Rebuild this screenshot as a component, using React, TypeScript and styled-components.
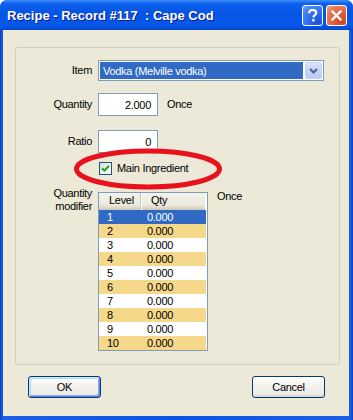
import React from 'react';
import styled, { createGlobalStyle } from 'styled-components';

const GlobalStyle = createGlobalStyle`
  html, body {
    margin: 0;
    padding: 0;
    background: #ffffff;
  }
  body {
    font-family: 'Liberation Sans', Arial, sans-serif;
    font-size: 11px;
    letter-spacing: -0.3px;
    color: #000;
  }
`;

const rows = [
  { level: 1, qty: '0.000' },
  { level: 2, qty: '0.000' },
  { level: 3, qty: '0.000' },
  { level: 4, qty: '0.000' },
  { level: 5, qty: '0.000' },
  { level: 6, qty: '0.000' },
  { level: 7, qty: '0.000' },
  { level: 8, qty: '0.000' },
  { level: 9, qty: '0.000' },
  { level: 10, qty: '0.000' },
];

const HelpIcon = () => (
  <svg width="11" height="13" viewBox="0 0 11 13">
    <path d="M2 4.2 C2 1.6 4 1 5.6 1 C7.6 1 9.2 2.2 9.2 3.9 C9.2 6 6.4 6.2 6.4 8.4" fill="none" stroke="#fff" strokeWidth="2.2" />
    <rect x="5.2" y="10" width="2.4" height="2.4" fill="#fff" />
  </svg>
);

const CloseIcon = () => (
  <svg width="11" height="11" viewBox="0 0 11 11">
    <path d="M1.5 1.5 L9.5 9.5 M9.5 1.5 L1.5 9.5" stroke="#fff" strokeWidth="2.3" strokeLinecap="square" />
  </svg>
);

const Chevron = () => (
  <svg width="9" height="6" viewBox="0 0 9 6">
    <path d="M1 1 L4.5 4.5 L8 1" fill="none" stroke="#4d6185" strokeWidth="2" />
  </svg>
);

const Check = () => (
  <svg width="9" height="9" viewBox="0 0 9 9">
    <path d="M1 4.2 L3.4 6.6 L8 1.8" fill="none" stroke="#21a121" strokeWidth="2" />
  </svg>
);

const App: React.FC = () => (
  <>
    <GlobalStyle />
    <Window>
      <TitleBar>
        <Title>{'Recipe - Record #117  : Cape Cod'}</Title>
        <CaptionButton $kind="help">
          <HelpIcon />
        </CaptionButton>
        <CaptionButton $kind="close">
          <CloseIcon />
        </CaptionButton>
      </TitleBar>

      <Body>
        <GroupBox>
          <FieldRow $top={0}>
            <Label>Item</Label>
            <Combo>
              <ComboValue>Vodka (Melville vodka)</ComboValue>
              <ComboButton>
                <Chevron />
              </ComboButton>
            </Combo>
          </FieldRow>

          <FieldRow $top={12}>
            <Label>Quantity</Label>
            <Field>
              <NumberBox>2.000</NumberBox>
              <Suffix>Once</Suffix>
            </Field>
          </FieldRow>

          <FieldRow $top={14}>
            <Label>Ratio</Label>
            <Field>
              <NumberBox>0</NumberBox>
            </Field>
          </FieldRow>

          <FieldRow $top={9}>
            <span />
            <CheckRow>
              <CheckBox>
                <Check />
              </CheckBox>
              <span>Main Ingredient</span>
            </CheckRow>
          </FieldRow>

          <FieldRow $top={17} $alignTop>
            <Label $raised>
              Quantity
              <br />
              modifier
            </Label>
            <Field $alignTop>
              <ListView>
                <ListHeader>
                  <HeadCell $width={42}>Level</HeadCell>
                  <HeadCell>Qty</HeadCell>
                </ListHeader>
                {rows.map((r, i) => (
                  <ListRow key={r.level} $selected={i === 0} $striped={i % 2 === 1}>
                    <LevelCell>{r.level}</LevelCell>
                    <QtyCell>{r.qty}</QtyCell>
                  </ListRow>
                ))}
              </ListView>
              <Suffix $raised>Once</Suffix>
            </Field>
          </FieldRow>
        </GroupBox>

        <ButtonBar>
          <XPButton $default>OK</XPButton>
          <XPButton>Cancel</XPButton>
        </ButtonBar>
      </Body>

      <Annotation width="156" height="48" viewBox="0 0 156 48">
        <ellipse cx="77" cy="23" rx="71.5" ry="18" fill="none" stroke="#e8121c" strokeWidth="5" />
      </Annotation>
    </Window>
  </>
);

export default App;

const Window = styled.div`
  position: relative;
  width: 353px;
  height: 420px;
  box-sizing: border-box;
  display: flex;
  flex-direction: column;
  background: linear-gradient(90deg, #0a3fcf 0, #1b5fe6 3px, #0a55e4 50%, #1b5fe6 calc(100% - 3px), #0a3fcf 100%);
  border-radius: 7px 7px 0 0;
  overflow: hidden;
`;

const TitleBar = styled.div`
  height: 30px;
  flex: none;
  display: flex;
  align-items: center;
  gap: 3px;
  padding: 0 6px 0 7px;
  box-sizing: border-box;
  background: linear-gradient(
    180deg,
    #3d8ff9 0,
    #0d60ed 12%,
    #0554e4 45%,
    #0658ea 82%,
    #0448cc 100%
  );
`;

const Title = styled.div`
  flex: 1;
  color: #ffffff;
  font-weight: bold;
  font-size: 13px;
  letter-spacing: 0;
  white-space: pre;
  text-shadow: 1px 1px 0 #0a1a8c;
  padding-top: 1px;
`;

const CaptionButton = styled.div<{ $kind: 'help' | 'close' }>`
  width: 21px;
  height: 21px;
  box-sizing: border-box;
  border: 1px solid #ffffff;
  border-radius: 3px;
  display: flex;
  align-items: center;
  justify-content: center;
  background: ${(p) =>
    p.$kind === 'close'
      ? 'radial-gradient(circle at 80% 85%, #cc4626 0, #e0603f 45%, #e8835f 80%, #f2a88a 100%)'
      : 'radial-gradient(circle at 80% 85%, #1f4fd6 0, #2f6df0 45%, #4b88f7 80%, #7aaafb 100%)'};
`;

const Body = styled.div`
  flex: 1;
  margin: 0 4px 4px 3px;
  background: #ece9d8;
  display: flex;
  flex-direction: column;
`;

const GroupBox = styled.div`
  margin: 17px 9px 0 12px;
  border: 1px solid #d0d0bf;
  border-radius: 3px;
  padding: 12px 0 13px;
  display: flex;
  flex-direction: column;
`;

const FieldRow = styled.div<{ $top: number; $alignTop?: boolean }>`
  display: grid;
  grid-template-columns: 76px auto;
  column-gap: 6px;
  justify-content: start;
  align-items: ${(p) => (p.$alignTop ? 'start' : 'center')};
  margin-top: ${(p) => p.$top}px;
`;

const Label = styled.div<{ $raised?: boolean }>`
  text-align: right;
  line-height: 13px;
  margin-top: ${(p) => (p.$raised ? '-5px' : '0')};
`;

const Field = styled.div<{ $alignTop?: boolean }>`
  display: flex;
  align-items: ${(p) => (p.$alignTop ? 'flex-start' : 'center')};
  gap: 9px;
`;

const Suffix = styled.span<{ $raised?: boolean }>`
  line-height: 13px;
  margin-top: ${(p) => (p.$raised ? '-2px' : '0')};
`;

const Combo = styled.div`
  width: 226px;
  height: 21px;
  box-sizing: border-box;
  border: 1px solid #7f9db9;
  background: #ffffff;
  display: flex;
  padding: 1px;
  gap: 2px;
`;

const ComboValue = styled.div`
  flex: 1;
  background: #316ac5;
  color: #ffffff;
  display: flex;
  align-items: center;
  padding-left: 3px;
`;

const ComboButton = styled.div`
  width: 17px;
  box-sizing: border-box;
  border: 1px solid #c3d3fd;
  border-radius: 2px;
  background: linear-gradient(180deg, #dce6fd 0, #c6d6fc 40%, #b7cbfa 100%);
  display: flex;
  align-items: center;
  justify-content: center;
`;

const NumberBox = styled.div`
  width: 60px;
  height: 23px;
  box-sizing: border-box;
  border: 1px solid #7f9db9;
  background: #ffffff;
  display: flex;
  align-items: center;
  justify-content: flex-end;
  padding-right: 6px;
`;

const CheckRow = styled.label`
  display: flex;
  align-items: center;
  gap: 5px;
  margin-left: 1px;
  line-height: 13px;
`;

const CheckBox = styled.span`
  width: 13px;
  height: 13px;
  box-sizing: border-box;
  border: 1px solid #1c5180;
  background: linear-gradient(135deg, #dcdcd7 0, #f6f6f3 70%, #ffffff 100%);
  display: flex;
  align-items: center;
  justify-content: center;
`;

const ListView = styled.div`
  width: 110px;
  box-sizing: border-box;
  border: 1px solid #7f9db9;
  background: #ffffff;
  padding-right: 1px;
`;

const ListHeader = styled.div`
  display: flex;
  height: 17px;
  box-sizing: border-box;
  background: linear-gradient(180deg, #f4f3ec 0, #ebeadb 70%, #e2decd 82%, #d6d2c2 91%, #cbc7b8 100%);
  border-right: 1px solid #ffffff;
`;

const HeadCell = styled.div<{ $width?: number }>`
  ${(p) => (p.$width ? `width: ${p.$width}px;` : 'flex: 1;')}
  box-sizing: border-box;
  padding-left: 10px;
  line-height: 15px;
  ${(p) => (p.$width ? 'border-right: 1px solid #c7c5b2; box-shadow: 1px 0 0 #ffffff;' : '')}
`;

const ListRow = styled.div<{ $selected?: boolean; $striped?: boolean }>`
  display: flex;
  height: 14px;
  line-height: 14px;
  background: ${(p) => (p.$selected ? '#316ac5' : p.$striped ? '#f6d88a' : '#ffffff')};
  color: ${(p) => (p.$selected ? '#ffffff' : '#000000')};
`;

const LevelCell = styled.div`
  width: 42px;
  padding-left: 8px;
  box-sizing: border-box;
`;

const QtyCell = styled.div`
  flex: 1;
  padding-left: 6px;
`;

const ButtonBar = styled.div`
  display: flex;
  justify-content: space-between;
  margin-top: 11px;
  padding: 0 24px 0 25px;
`;

const XPButton = styled.button<{ $default?: boolean }>`
  width: 73px;
  height: 22px;
  box-sizing: border-box;
  border: 1px solid #003c74;
  border-radius: 3px;
  font-family: 'Liberation Sans', Arial, sans-serif;
  font-size: 11px;
  letter-spacing: -0.3px;
  color: #000000;
  padding: 0;
  background: linear-gradient(180deg, #ffffff 0, #f4f3ee 40%, #ecebe6 85%, #d6d0c5 100%);
  box-shadow: ${(p) =>
    p.$default
      ? 'inset 1px 1px 0 #cee7ff, inset -1px -1px 0 #6982ee, inset 2px 2px 0 #bcd4f6, inset -2px -2px 0 #89ade4'
      : 'none'};
`;

const Annotation = styled.svg`
  position: absolute;
  left: 71px;
  top: 146px;
  pointer-events: none;
`;
